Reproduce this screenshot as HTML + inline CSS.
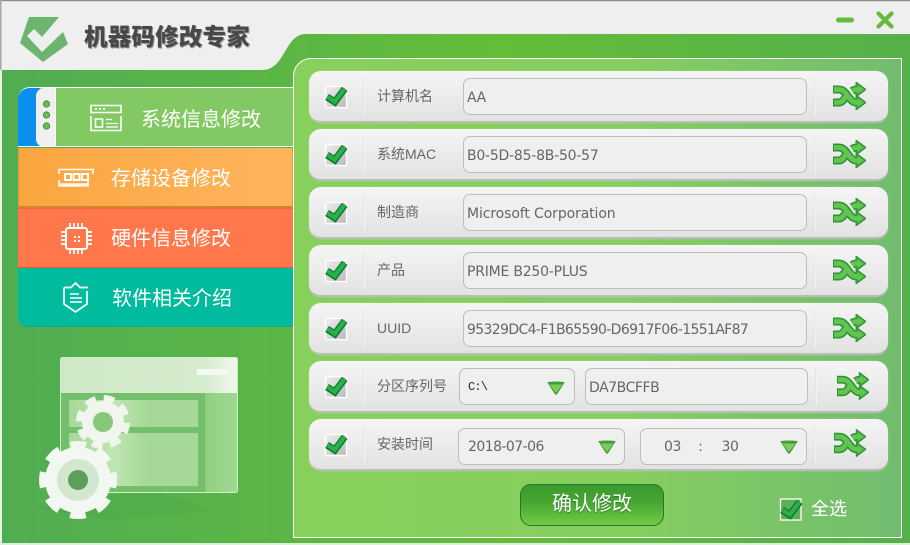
<!DOCTYPE html>
<html><head><meta charset="utf-8"><style>
*{box-sizing:border-box}
html,body{margin:0;padding:0}
body{width:910px;height:545px;overflow:hidden;position:relative;background:linear-gradient(90deg,#50ad52,#63bd39 55%,#55b04a);font-family:"Liberation Sans","Noto Sans CJK SC",sans-serif}
.a{position:absolute}
#panel{left:293px;top:58px;width:609px;height:480px;border:1px solid #fff;border-right:1.5px solid #fff;border-radius:18px 0 0 0;background:linear-gradient(90deg,#88d05c,#86ce5e 55%,#72bc70)}
.row{position:absolute;left:309px;width:579px;height:52px;border-radius:12px;background:linear-gradient(#f6f5f6,#e2e2e2);border-bottom:2px solid #b9bdb9;box-shadow:0 0 1px #c8d8c0}
.sep{position:absolute;top:7px;width:2px;height:37px;background:linear-gradient(90deg,#dcdcdc,#fbfbfb)}
.lab{position:absolute;left:68px;top:16px;font-size:14px;line-height:18px;color:#666;white-space:nowrap}
.inp{position:absolute;top:7px;height:37px;border:1px solid #bdbdbd;border-radius:7px;background:#efefef;font:14px/37px "DejaVu Sans",sans-serif;letter-spacing:-.35px;color:#666;padding-left:3px;white-space:nowrap}
.chk{position:absolute;left:15px;top:14px}
.shf{position:absolute;top:11px}
.tri{position:absolute;top:14px}
.mi{position:absolute;left:18px;width:275px;color:#fff;font-size:20px;line-height:28px}
.mi span{position:absolute;white-space:nowrap}
</style></head><body>
<svg width="0" height="0" style="position:absolute"><defs>
<linearGradient id="cg" x1="0" y1="0" x2="1" y2="1"><stop offset="0" stop-color="#f0f0f0"/><stop offset="1" stop-color="#b8b8b8"/></linearGradient>
<symbol id="ck" viewBox="0 0 24 24"><rect x="1.500" y="1.500" width="21" height="21" fill="url(#cg)" stroke="#fff" stroke-width="1.400"/><g fill="none"><path d="M3 12L10.800 17 20.700 3.800" stroke="#0f7a31" stroke-width="7"/><path d="M3.500 12L10.800 16.800 20.300 4.200" stroke="#2ab049" stroke-width="4.200"/></g></symbol>
<symbol id="sf" viewBox="0 0 34 28"><g fill="none" stroke-linejoin="round"><path d="M1 7.500h6c8 0 10 13 17 13h3M1 20.500h6c3 0 5-3 7-6M20 9c1.500-1 3-1.500 5-1.500h3" stroke="#2f9433" stroke-width="8"/></g><path d="M24 0l10 7.500-10 7.500zM24 13l10 7.500-10 7.500z" fill="#3aa33a" stroke="#2f9433"/><g fill="none"><path d="M2 7.500h5c8 0 10 13 17 13h3M2 20.500h5c3 0 5-3 7-6M20 9c1.500-1 3-1.500 5-1.500h3" stroke="#62c552" stroke-width="4.800"/></g><path d="M25.500 3l6.500 4.500-6.500 4.500zM25.500 16l6.500 4.500-6.500 4.500z" fill="#62c552"/></symbol>
<symbol id="tr" viewBox="0 0 18 14"><path d="M1 1.500Q9 .5 17 1.500L10 12.500Q9 14 8 12.500z" fill="#3d9c35" stroke="#4a9f3f"/><path d="M2.500 3.500h13L9 12z" fill="#7dcb5c"/></symbol>
</defs></svg>

<!-- header -->
<svg class="a" style="left:0;top:0" width="910" height="75"><path d="M0 0H910V34H306C284 34 286 70 262 70H0z" fill="#efefef"/><rect width="910" height="1.200" fill="#8a8a8a"/><rect width="1.500" height="70" fill="#a8a8a8"/>
<path d="M29 17H59L42 37 34 29 27 36 42 52 63 32 68 44 43 62 20 43z" fill="#6db56f"/>
<rect x="836" y="17.500" width="18" height="5" rx="2.500" fill="#63bb3c"/><path d="M878.500 13.500L891.500 26.500M891.500 13.500L878.500 26.500" stroke="#63bb3c" stroke-width="4.200" stroke-linecap="round"/></svg>
<div class="a" style="left:84px;top:23px;font-size:23.500px;line-height:28px;font-weight:900;color:#484848;text-shadow:1px 1px 0 #999;white-space:nowrap;letter-spacing:.2px">机器码修改专家</div>
<div class="a" style="left:0;top:70px;width:2px;height:475px;background:#e8f3e4"></div>
<div class="a" style="left:0;top:543px;width:910px;height:1.500px;background:#dfeeda"></div>

<!-- menu -->
<div class="a" style="left:18px;top:87px;width:275px;height:60px;border-top:1px solid #fff;border-bottom:1px solid #fff;background:#82c963;border-radius:12px 0 0 0;overflow:hidden">
 <div class="a" style="left:0;top:0;width:22px;height:59px;background:#0b8fec"></div>
 <div class="a" style="left:18px;top:0;width:20px;height:59px;background:#f0f0f0;border-radius:8px 0 0 8px;border-right:1px solid #fff"></div>
 <svg class="a" style="left:20px;top:10px" width="16" height="40"><g fill="#6cc04f" stroke="#3b7f3b" stroke-width=".8"><circle cx="8.500" cy="6" r="3.200"/><circle cx="8.500" cy="17" r="3.200"/><circle cx="8.500" cy="28" r="3.200"/></g></svg>
 <div class="a" style="left:123px;top:17px;color:#fff;font-size:20px;line-height:30px;white-space:nowrap">系统信息修改</div>
</div>
<svg class="a" style="left:90px;top:104px" width="34" height="28" fill="none" stroke="#fff"><path d="M1 1.500h30v7H1zM1 12v14.500h30V12" stroke-width="1.600"/><path d="M5 5h2M9 5h2M13 5h2" stroke-width="2"/><path d="M5.500 15h7v8h-7z" stroke-width="1.600"/><path d="M16 15.500h6M16 19.500h12M16 23h12" stroke-width="1.300"/></svg>

<div class="mi" style="top:148px;height:60px;background:linear-gradient(90deg,#faa640,#ffb55d);border:1px solid #e08d30;border-left-color:#e8953a;border-right-color:#e8953a;border-top:none;border-bottom:2px solid #d48430"><span style="left:92px;top:17px">存储设备修改</span></div>
<svg class="a" style="left:58px;top:168px" width="37" height="20" fill="none" stroke="#fff"><path d="M1 6V1.500h34V6M1 12v6h2v-2h2v2h2v-2h2v2h2v-2h2v2h2v-2h2v2h2v-2h2v2h2v-2h2v2h2v-2h2v2h1v-6" stroke-width="1.600"/><path d="M7 6h6v6H7zM15.500 6h6v6h-6zM24 6h6v6h-6z" stroke-width="2"/></svg>

<div class="mi" style="top:208px;height:60px;background:#ff774b;border-bottom:1.500px solid #e55e30;border-top:1px solid #f0683a"><span style="left:93px;top:16px">硬件信息修改</span></div>
<svg class="a" style="left:60px;top:222px" width="33" height="33" fill="none" stroke="#fff"><rect x="6" y="6" width="21" height="21" rx="2" stroke-width="2"/><path d="M10 1v4M14 1v4M18 1v4M22 1v4M10 28v4M14 28v4M18 28v4M22 28v4M1 10h4M1 14h4M1 18h4M1 22h4M28 10h4M28 14h4M28 18h4M28 22h4" stroke-width="1.700"/><path d="M14 14h2v2h-2zM18 14h2v2h-2zM14 18h2v2h-2zM18 18h2v2h-2z" fill="#fff" stroke="none"/></svg>

<div class="mi" style="top:268px;height:59px;background:#00bb9d;border-radius:0 0 0 10px;border-bottom:1px solid #1ba78e"><span style="left:94px;top:17px">软件相关介绍</span></div>
<svg class="a" style="left:62px;top:280px" width="28" height="34" fill="none" stroke="#fff" stroke-width="1.700"><path d="M2 7.500H9L13.500 3 18 7.500H26M2 7.500V24L13.500 32 25 24V11"/><path d="M8 14h9M8 18h12M8 22h12" stroke-width="1.400"/></svg>

<!-- illustration -->
<svg class="a" style="left:0;top:345px" width="290" height="195">
<defs><linearGradient id="wg" x1="0" y1="0" x2="1" y2="0"><stop offset="0" stop-color="#cfe9c8"/><stop offset=".8" stop-color="#d4ebcc"/><stop offset="1" stop-color="#f0f8ec"/></linearGradient>
<linearGradient id="bg2" x1="0" y1="0" x2="1" y2="0"><stop offset="0" stop-color="#8fd07f"/><stop offset="1" stop-color="#a0d992"/></linearGradient>
<linearGradient id="bl" x1="0" y1="0" x2="1" y2="0"><stop offset="0" stop-color="#a6d997"/><stop offset=".35" stop-color="#c0e5b4"/><stop offset=".6" stop-color="#a6d997"/></linearGradient></defs>
<path d="M32 163L150 145 215 166 110 174z" fill="#3d8f3d" opacity=".13"/>
<rect x="60.500" y="12.500" width="177" height="135" rx="2" fill="#74bf6c" stroke="#d5ecce"/>
<rect x="61" y="13" width="176" height="35" fill="url(#wg)"/>
<rect x="197" y="24" width="31" height="6" fill="#f2f9ef"/>
<rect x="205" y="48" width="32" height="99" fill="url(#bg2)"/>
<rect x="69" y="55" width="129" height="27" fill="url(#bl)"/>
<rect x="69" y="88" width="129" height="53" fill="url(#bl)"/>
<g transform="rotate(14 103 77)">
<circle cx="103" cy="77" r="21" fill="#f0f6ee"/>
<circle cx="103" cy="77" r="23.500" fill="none" stroke="#f0f6ee" stroke-width="7" stroke-dasharray="10.500 7.960" stroke-dashoffset="5.250"/>
</g>
<circle cx="103" cy="77" r="10" fill="#86c97a"/>
<circle cx="78" cy="135" r="33" fill="#f2f7f1"/>
<circle cx="78" cy="135" r="35" fill="none" stroke="#f2f7f1" stroke-width="8" stroke-dasharray="15.500 11.990" stroke-dashoffset="7.750"/>
<circle cx="78" cy="135" r="21" fill="#d3e6ce"/>
<circle cx="78" cy="135" r="10" fill="#5c9f5c"/>
</svg>

<div id="panel" class="a"></div>

<!-- rows -->
<div class="row" style="top:71px"><svg class="chk" width="24" height="24"><use href="#ck"/></svg><div class="sep" style="left:54px"></div><div class="lab">计算机名</div><div class="inp" style="left:154px;width:344px;line-height:38px">AA</div><div class="sep" style="left:505px"></div><svg class="shf" style="left:523px" width="34" height="28"><use href="#sf"/></svg></div>
<div class="row" style="top:129px"><svg class="chk" width="24" height="24"><use href="#ck"/></svg><div class="sep" style="left:54px"></div><div class="lab">系统MAC</div><div class="inp" style="left:154px;width:344px;line-height:38px;letter-spacing:-.23px">B0-5D-85-8B-50-57</div><div class="sep" style="left:505px"></div><svg class="shf" style="left:523px" width="34" height="28"><use href="#sf"/></svg></div>
<div class="row" style="top:187px"><svg class="chk" width="24" height="24"><use href="#ck"/></svg><div class="sep" style="left:54px"></div><div class="lab">制造商</div><div class="inp" style="left:154px;width:344px;line-height:38px;letter-spacing:-.11px">Microsoft Corporation</div><div class="sep" style="left:505px"></div><svg class="shf" style="left:523px" width="34" height="28"><use href="#sf"/></svg></div>
<div class="row" style="top:245px"><svg class="chk" width="24" height="24"><use href="#ck"/></svg><div class="sep" style="left:54px"></div><div class="lab">产品</div><div class="inp" style="left:154px;width:344px;line-height:38px;letter-spacing:-.22px">PRIME B250-PLUS</div><div class="sep" style="left:505px"></div><svg class="shf" style="left:523px" width="34" height="28"><use href="#sf"/></svg></div>
<div class="row" style="top:303px"><svg class="chk" width="24" height="24"><use href="#ck"/></svg><div class="sep" style="left:54px"></div><div class="lab">UUID</div><div class="inp" style="left:154px;width:344px;line-height:38px;letter-spacing:-.64px">95329DC4-F1B65590-D6917F06-1551AF87</div><div class="sep" style="left:505px"></div><svg class="shf" style="left:523px" width="34" height="28"><use href="#sf"/></svg></div>
<div class="row" style="top:361px"><svg class="chk" width="24" height="24"><use href="#ck"/></svg><div class="sep" style="left:54px"></div><div class="lab">分区序列号</div><div class="inp" style="left:150px;width:116px;font:12px/36px 'Liberation Mono',monospace;letter-spacing:-.8px;color:#222;padding-left:8px">C:\</div><svg class="tri" style="left:238px;top:20px" width="18" height="14"><use href="#tr"/></svg><div class="inp" style="left:276px;width:223px;line-height:38px;letter-spacing:-.45px">DA7BCFFB</div><div class="sep" style="left:506px"></div><svg class="shf" style="left:527px" width="33" height="28"><use href="#sf"/></svg></div>
<div class="row" style="top:419px"><svg class="chk" width="24" height="24"><use href="#ck"/></svg><div class="sep" style="left:54px"></div><div class="lab">安装时间</div><div class="inp" style="left:149px;width:167px;top:9px;line-height:37px;padding-left:9px;letter-spacing:-.55px">2018-07-06</div><svg class="tri" style="left:289px;top:21px" width="18" height="14"><use href="#tr"/></svg><div class="inp" style="left:331px;width:167px;top:9px;line-height:37px;padding-left:23px">03<span style="margin-left:17px">:</span><span style="margin-left:19px">30</span></div><svg class="tri" style="left:471px;top:21px" width="18" height="14"><use href="#tr"/></svg><div class="sep" style="left:505px"></div><svg class="shf" style="left:524px;top:10px" width="33" height="28"><use href="#sf"/></svg></div>

<!-- bottom -->
<div class="a" style="left:520px;top:484px;width:144px;height:42px;border:1px solid #1e7a2e;border-radius:11px;background:linear-gradient(#3a9a2e,#46a732 45%,#72cb42);color:#fff;font-size:20px;line-height:39px;text-align:center;text-shadow:0 1px 1px #2c7a2c">确认修改</div>
<svg class="a" style="left:779px;top:498px" width="24" height="24"><rect x="1.500" y="1" width="20.500" height="21" fill="#5fae55" stroke="#fff" stroke-width="1.300"/><g fill="none"><path d="M3 12L10.800 17 20.700 3.800" stroke="#0f7a31" stroke-width="7"/><path d="M3.500 12L10.800 16.800 20.300 4.200" stroke="#2ab049" stroke-width="4.200"/></g></svg>
<div class="a" style="left:811px;top:496px;color:#fff;font-size:18px;line-height:26px;white-space:nowrap">全选</div>
</body></html>
